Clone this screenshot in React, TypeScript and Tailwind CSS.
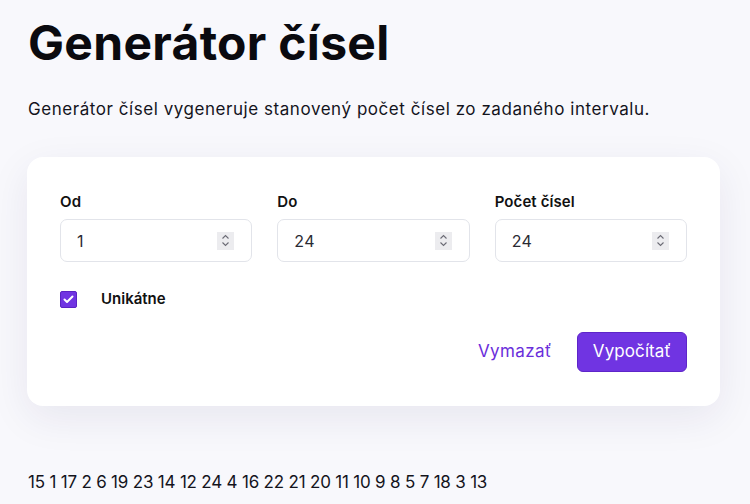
import { useState } from 'react'

const font = { fontFamily: 'Inter, "Noto Sans", sans-serif' }

function NumberField({ label, value }: { label: string; value: string }) {
  return (
    <div className="flex flex-col">
      <label className="text-[15px] font-semibold text-[#111] leading-none mb-[10px] tracking-[0.1px]">{label}</label>
      <div className="h-[43px] rounded-[7px] border border-[#e2e4ea] bg-white flex items-center pl-[16px] pr-[17px]">
        <span className="flex-1 text-[16px] text-[#2a2a33] tracking-[0.3px]">{value}</span>
        {/* spinner */}
        <div className="w-[17px] h-[18px] bg-[#ececef] flex flex-col items-center justify-center">
          <svg width="9" height="13" viewBox="0 0 9 13" fill="none" stroke="#6b6b75" strokeWidth="1.1">
            <path d="M1.5 4.5 L4.5 1.5 L7.5 4.5" />
            <path d="M1.5 8.5 L4.5 11.5 L7.5 8.5" />
          </svg>
        </div>
      </div>
    </div>
  )
}

export default function App() {
  const [unique, setUnique] = useState(true)
  const numbers = [15, 1, 17, 2, 6, 19, 23, 14, 12, 24, 4, 16, 22, 21, 20, 11, 10, 9, 8, 5, 7, 18, 3, 13]

  return (
    <main className="min-h-[504px] bg-[#f8f8fc] pl-[27px] pr-[30px] pt-[14px] overflow-hidden" style={font}>
      {/* Header */}
      <h1 className="text-[48px] font-bold text-[#0a0a0f] leading-[1.2] tracking-[0.3px] ml-[1px]">Generátor čísel</h1>
      <p className="mt-[25px] text-[17px] text-[#14141c] tracking-[0.55px] ml-[1px]">
        Generátor čísel vygeneruje stanovený počet čísel zo zadaného intervalu.
      </p>

      {/* Card */}
      <div className="mt-[35px] bg-white rounded-[16px] shadow-[0_12px_40px_rgba(40,30,90,0.08)] pl-[33px] pr-[33px] pt-[37px] pb-[34px]">
        <div className="grid grid-cols-3 gap-[25px]">
          <NumberField label="Od" value="1" />
          <NumberField label="Do" value="24" />
          <NumberField label="Počet čísel" value="24" />
        </div>

        <div className="mt-[26px] flex items-center">
          <button
            onClick={() => setUnique(!unique)}
            className={`w-[17px] h-[17px] rounded-[2px] flex items-center justify-center border ${unique ? 'bg-[#7034e2] border-[#5a22c4]' : 'bg-white border-[#ccc]'}`}
          >
            {unique && (
              <svg width="11" height="9" viewBox="0 0 11 9" fill="none" stroke="white" strokeWidth="2" strokeLinecap="round" strokeLinejoin="round">
                <path d="M1.5 4.5 L4 7 L9.5 1.5" />
              </svg>
            )}
          </button>
          <span className="ml-[24px] text-[15px] font-semibold text-[#111]">Unikátne</span>
        </div>

        <div className="mt-[21px] flex justify-end items-center gap-[25px]">
          <button className="text-[17px] text-[#6a2edb] tracking-[0.4px]">Vymazať</button>
          <button className="h-[40px] px-[15px] rounded-[6px] bg-[#7034e2] border border-[#5e25c9] text-white text-[17px] tracking-[0.1px]">
            Vypočítať
          </button>
        </div>
      </div>

      {/* Result */}
      <p className="mt-[64px] text-[17px] text-[#14141c] tracking-[-0.2px] ml-[1px]">{numbers.join(' ')}</p>
    </main>
  )
}
